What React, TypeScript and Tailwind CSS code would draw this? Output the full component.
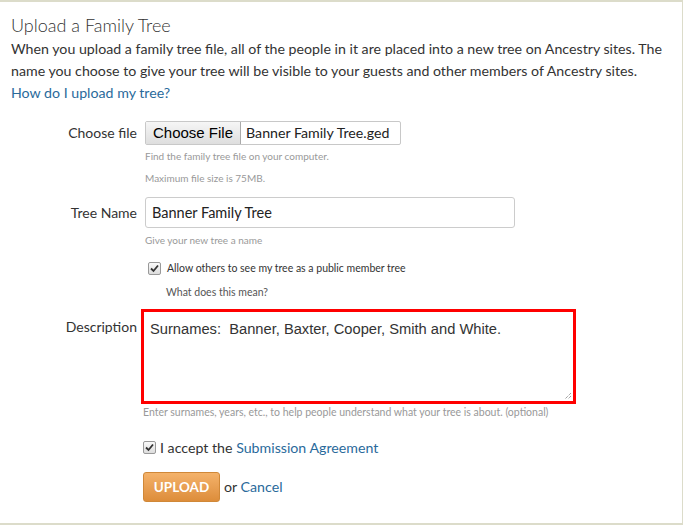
import React from "react";

const sans = { fontFamily: "Lato, 'Open Sans', sans-serif" };

export default function App() {
  return (
    <div className="h-[525px] w-[683px] bg-white text-[#333]" style={sans}>
      <div className="h-[525px] w-[683px] border-t-2 border-r border-b-2 border-[#dcdcca] pl-[11px] pt-[10px]">
        <h1 className="text-[18px] font-light leading-[26px] text-[#333]">Upload a Family Tree</h1>
        <p className="text-[14.2px] leading-[22px] text-[#333] pr-[10px]">
          When you upload a family tree file, all of the people in it are placed into a new tree on Ancestry sites. The name you choose to give your tree will be visible to your guests and other members of Ancestry sites.
        </p>
        <a className="block text-[14.2px] leading-[22px] text-[#2a6a9b]">How do I upload my tree?</a>

        <div className="mt-[17px] grid grid-cols-[126px_1fr] gap-x-[8px]">
          <div className="pt-[2px] text-right text-[14px] leading-[20px]">Choose file</div>
          <div>
            <div className="flex h-[24px] w-[256px] items-center rounded-[2px] border border-[#c8c8c8] bg-white">
              <div
                className="flex h-[22px] items-center border-r border-[#aaa] bg-gradient-to-b from-[#f6f6f6] to-[#dedede] px-[7px] text-[15px] text-black"
                style={{ fontFamily: "'Liberation Sans', Arial, sans-serif" }}
              >
                Choose File
              </div>
              <span className="pl-[5px] text-[14.2px] text-[#222]">Banner Family Tree.ged</span>
            </div>
            <div className="mt-[6px] text-[10px] leading-[11px] text-[#999]">Find the family tree file on your computer.</div>
            <div className="mt-[11px] text-[10px] leading-[11px] text-[#999]">Maximum file size is 75MB.</div>
          </div>

          <div className="mt-[16px] pt-[3px] text-right text-[14px] leading-[20px]">Tree Name</div>
          <div className="mt-[13px]">
            <div className="flex h-[31px] w-[370px] items-center rounded-[3px] border border-[#ccc] px-[6px] text-[14.5px] text-[#222]">
              Banner Family Tree
            </div>
            <div className="mt-[7px] text-[10px] leading-[11px] text-[#999]">Give your new tree a name</div>
            <div className="mt-[15px] flex items-center pl-[3px]">
              <Check />
              <span className="ml-[6px] text-[10.5px] text-[#333]">Allow others to see my tree as a public member tree</span>
            </div>
            <div className="mt-[8px] pl-[21px] text-[10.5px] text-[#555]">What does this mean?</div>
          </div>

          <div className="mt-[16px] text-right text-[14px] leading-[20px]">Description</div>
          <div className="mt-[8px] ml-[-4px]">
            <div className="relative h-[95px] w-[435px] border-[3px] border-[#ff0000] bg-white">
              <div
                className="px-[6px] pt-[6px] text-[14.7px] text-[#333]"
                style={{ fontFamily: "'Liberation Sans', Arial, sans-serif" }}
              >
                Surnames:&nbsp; Banner, Baxter, Cooper, Smith and White.
              </div>
              <svg className="absolute bottom-[1px] right-[1px]" width="9" height="9" viewBox="0 0 9 9">
                <path d="M8 2 L2 8 M8 5 L5 8" stroke="#777" strokeWidth="1" strokeDasharray="1 1" />
              </svg>
            </div>
            <div className="mt-[1px] text-[10.5px] leading-[14px] text-[#999] pl-[2px]">
              Enter surnames, years, etc., to help people understand what your tree is about. (optional)
            </div>
            <div className="mt-[18px] flex items-center pl-[2px]">
              <Check />
              <span className="ml-[4px] text-[14.2px] text-[#333]">
                I accept the <span className="text-[#2a6a9b]">Submission Agreement</span>
              </span>
            </div>
            <div className="mt-[14px] flex items-center pl-[2px]">
              <button className="h-[30px] w-[77px] rounded-[3px] border border-[#d08838] bg-gradient-to-b from-[#f4b26a] to-[#dd8d3a] text-[13.5px] font-bold text-white">
                UPLOAD
              </button>
              <span className="ml-[4px] text-[14.2px] text-[#333]">
                or <span className="text-[#2a6a9b]">Cancel</span>
              </span>
            </div>
          </div>
        </div>
      </div>
    </div>
  );
}

function Check() {
  return (
    <span className="flex h-[13px] w-[13px] items-center justify-center rounded-[2px] border border-[#999] bg-gradient-to-b from-[#fafafa] to-[#ddd]">
      <svg width="9" height="9" viewBox="0 0 9 9">
        <path d="M1 4.5 L3.5 7 L8 1.5" stroke="#333" strokeWidth="1.8" fill="none" />
      </svg>
    </span>
  );
}
